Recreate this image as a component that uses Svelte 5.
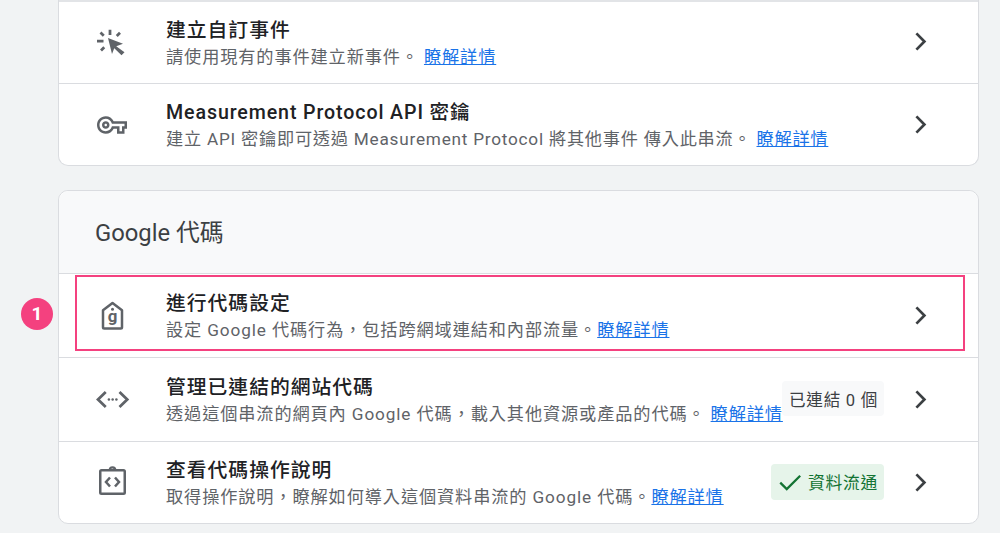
<script>
	const chevron = 'M1.4 1.4 L9.4 9.5 L1.4 17.6';
	const eventRows = [
		{ icon: 'click', title: '建立自訂事件', desc: '請使用現有的事件建立新事件。', gap: true },
		{ icon: 'key', title: 'Measurement Protocol API 密鑰', desc: '建立 API 密鑰即可透過 Measurement Protocol 將其他事件 傳入此串流。', gap: true, tight: true }
	];
	const tagRows = [
		{ icon: 'tag', title: '進行代碼設定', desc: '設定 Google 代碼行為，包括跨網域連結和內部流量。', active: true },
		{ icon: 'code', title: '管理已連結的網站代碼', desc: '透過這個串流的網頁內 Google 代碼，載入其他資源或產品的代碼。', gap: true, badge: '已連結 0 個' },
		{ icon: 'clip', title: '查看代碼操作說明', desc: '取得操作說明，瞭解如何導入這個資料串流的 Google 代碼。', status: '資料流通' }
	];
</script>

{#snippet icon(name)}
	<svg class="icon" viewBox="0 0 24 24" width="30" height="30">
		{#if name === 'click'}
			<path d="M8.8 8 L20.8 12.6 L15.4 14.6 L22 19.4 L19.6 21.8 L13.8 16.2 L12 20.8 Z" fill="#5f6368" />
			<path d="M10.4 1.4 V5.6 M0 10.4 H5.2 M2.8 3.6 L5.4 6.2 M18.4 3.8 L15.8 6.4 M3.2 18 L5.8 15.4" stroke="#5f6368" stroke-width="2.2" fill="none" />
		{:else if name === 'key'}
			<path fill="#5f6368" d="M22 19h-6v-4h-2.68c-1.14 2.42-3.6 4-6.32 4-3.86 0-7-3.14-7-7s3.14-7 7-7c2.72 0 5.17 1.58 6.32 4H24v6h-2v4zm-4-2h2v-4h2v-2H11.94l-.23-.67C11.01 8.34 9.11 7 7 7c-2.76 0-5 2.24-5 5s2.24 5 5 5c2.11 0 4.01-1.34 4.71-3.33l.23-.67H18v4zM7 15c-1.65 0-3-1.35-3-3s1.35-3 3-3 3 1.35 3 3-1.35 3-3 3zm0-4c-.55 0-1 .45-1 1s.45 1 1 1 1-.45 1-1-.45-1-1-1z" />
		{:else if name === 'tag'}
			<path d="M12.4 1.6 L20 7.4 V21 a1 1 0 0 1 -1 1 H5.8 a1 1 0 0 1 -1 -1 V7.4 Z" fill="none" stroke="#5f6368" stroke-width="2" stroke-linejoin="round" />
			<circle cx="12.4" cy="6.6" r="1.2" fill="#5f6368" />
			<text x="12.4" y="16.8" text-anchor="middle" class="tag-letter">g</text>
		{:else if name === 'code'}
			<path d="M7 5.6 L0.8 11.6 L7 17.6 M18 5.6 L24.2 11.6 L18 17.6" fill="none" stroke="#5f6368" stroke-width="2.2" />
			<circle cx="9.5" cy="11.6" r="1" fill="#5f6368" />
			<circle cx="12.5" cy="11.6" r="1" fill="#5f6368" />
			<circle cx="15.5" cy="11.6" r="1" fill="#5f6368" />
		{:else}
			<path d="M3.6 1.8 H21.2 a1 1 0 0 1 1 1 V19.6 a1 1 0 0 1 -1 1 H3.6 a1 1 0 0 1 -1 -1 V2.8 a1 1 0 0 1 1 -1 Z" fill="none" stroke="#5f6368" stroke-width="2" />
			<path d="M10.2 1.6 a2.2 2.2 0 0 1 4.4 0" fill="none" stroke="#5f6368" stroke-width="1.8" />
			<path d="M10.4 7.6 L7.2 11.2 L10.4 14.8 M14.4 7.6 L17.6 11.2 L14.4 14.8" fill="none" stroke="#5f6368" stroke-width="2" />
		{/if}
	</svg>
{/snippet}

{#snippet row(item)}
	<div class="row" class:tight={item.tight}>
		{@render icon(item.icon)}
		<div class="text">
			<div class="title">{item.title}</div>
			<div class="desc">{item.desc}{#if item.gap}<span class="gap"></span>{/if}<a href="#top">瞭解詳情</a></div>
		</div>
		{#if item.badge}
			<span class="badge">{item.badge}</span>
		{/if}
		{#if item.status}
			<span class="badge ok">
				<svg viewBox="0 0 24 24" width="26" height="26"><path d="M3 12.6 L9 18.6 L21.4 6.2" fill="none" stroke="#137333" stroke-width="2.1" /></svg>
				{item.status}
			</span>
		{/if}
		<svg class="chevron" viewBox="0 0 11 19" width="13" height="19"><path d={chevron} fill="none" stroke="#3c4043" stroke-width="2.7" /></svg>
		{#if item.active}
			<div class="highlight"></div>
			<div class="step">1</div>
		{/if}
	</div>
{/snippet}

<main class="page">
	<section class="card first">
		{#each eventRows as item}
			{@render row(item)}
		{/each}
	</section>
	<section class="card tags">
		<header class="card-head">Google 代碼</header>
		{#each tagRows as item}
			{@render row(item)}
		{/each}
	</section>
</main>

<style>
	:global(body) {
		background: #f1f3f4;
	}

	.page {
		display: flex;
		flex-direction: column;
		gap: 24px;
		width: 921px;
		margin-left: 58px;
		font-family: Roboto, 'Noto Sans CJK TC', sans-serif;
	}

	.card {
		background: #fff;
		border: 1px solid #dadce0;
		border-radius: 10px;
	}

	.first {
		border-top: 0;
		border-radius: 0 0 10px 10px;
	}

	.first .row:first-child {
		border-top: 2px solid #e2e4e7;
		height: 83px;
	}

	.first .row:first-child .chevron {
		margin-bottom: 2px;
	}

	.card-head {
		display: flex;
		align-items: center;
		height: 82px;
		padding: 0 0 4px 36px;
		box-sizing: border-box;
		background: #f8f9fa;
		border-radius: 10px 10px 0 0;
		font-size: 23.8px;
		color: #3c4043;
	}

	.row {
		position: relative;
		display: flex;
		align-items: center;
		height: 82px;
		box-sizing: border-box;
		padding: 0 51px 0 38px;
		border-top: 1px solid #dadce0;
	}

	.tags .row {
		height: 84px;
	}

	.tags .row:last-child {
		height: 82px;
	}

	.icon {
		flex: none;
		margin-right: 39px;
		overflow: visible;
	}

	.tag-letter {
		font-family: Roboto, sans-serif;
		font-size: 13.5px;
		font-weight: 700;
		fill: #5f6368;
	}

	.text {
		flex: 1;
		min-width: 0;
		padding-top: 3px;
	}

	.title {
		font-size: 19.8px;
		font-weight: 500;
		line-height: 26px;
		letter-spacing: 1px;
		color: #202124;
	}

	.desc {
		font-size: 17.2px;
		line-height: 27px;
		letter-spacing: 0.88px;
		color: #5f6368;
		white-space: nowrap;
	}

	.tight .title {
		font-size: 19.6px;
		letter-spacing: 0.9px;
	}

	.tight .desc {
		letter-spacing: 0.77px;
	}

	.desc a {
		color: #1a73e8;
		text-decoration: underline;
	}

	.gap {
		display: inline-block;
		width: 5px;
	}

	.badge {
		display: flex;
		align-items: center;
		flex: none;
		height: 35px;
		padding: 0 6px 0 7px;
		margin-bottom: 2px;
		background: #f8f9fa;
		border-radius: 4px;
		font-size: 16.6px;
		letter-spacing: 0.72px;
		color: #3c4043;
	}

	.ok {
		gap: 5px;
		height: 36px;
		padding: 0 6px;
		background: #e6f4ea;
		font-size: 16.8px;
		color: #137333;
	}

	.chevron {
		flex: none;
		margin-left: 30px;
	}

	.highlight {
		position: absolute;
		left: 16px;
		right: 13px;
		top: 1px;
		height: 76px;
		box-sizing: border-box;
		border: 2px solid #f4417f;
		pointer-events: none;
	}

	.step {
		position: absolute;
		left: -38px;
		top: 24px;
		width: 32px;
		height: 32px;
		border-radius: 50%;
		background: #f4417f;
		color: #fff;
		font-size: 19px;
		font-weight: 700;
		line-height: 32px;
		text-align: center;
	}
</style>
